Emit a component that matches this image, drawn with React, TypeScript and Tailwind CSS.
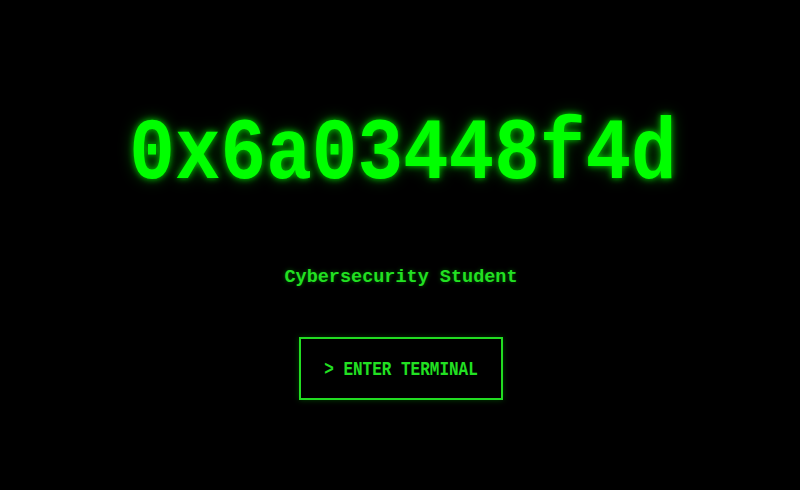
import React from "react";

export default function App() {
  return (
    <div className="w-[800px] h-[490px] bg-black flex flex-col items-center overflow-hidden font-['Liberation_Mono','DejaVu_Sans_Mono',monospace]">
      <h1 className="mt-[117px] text-[76px] leading-none font-bold text-[#00ff00] scale-y-[1.15] translate-x-[3px] [text-shadow:0_0_6px_rgba(0,255,0,0.75),0_0_14px_rgba(0,255,0,0.35)]">
        0x6a03448f4d
      </h1>
      <p className="mt-[76px] text-[18.5px] leading-none font-bold text-[#22e022] translate-x-[1px] [text-shadow:0_0_4px_rgba(0,255,0,0.35)]">
        Cybersecurity Student
      </p>
      <button className="mt-[49px] w-[204px] h-[63px] border-2 border-[#22dd22] flex items-center justify-center text-[#22e022] font-bold text-[16px] leading-none translate-x-[1px] shadow-[0_0_6px_rgba(0,255,0,0.25)]">
        <span className="scale-y-[1.3] whitespace-pre translate-y-[2px]">&gt; ENTER TERMINAL</span>
      </button>
    </div>
  );
}
